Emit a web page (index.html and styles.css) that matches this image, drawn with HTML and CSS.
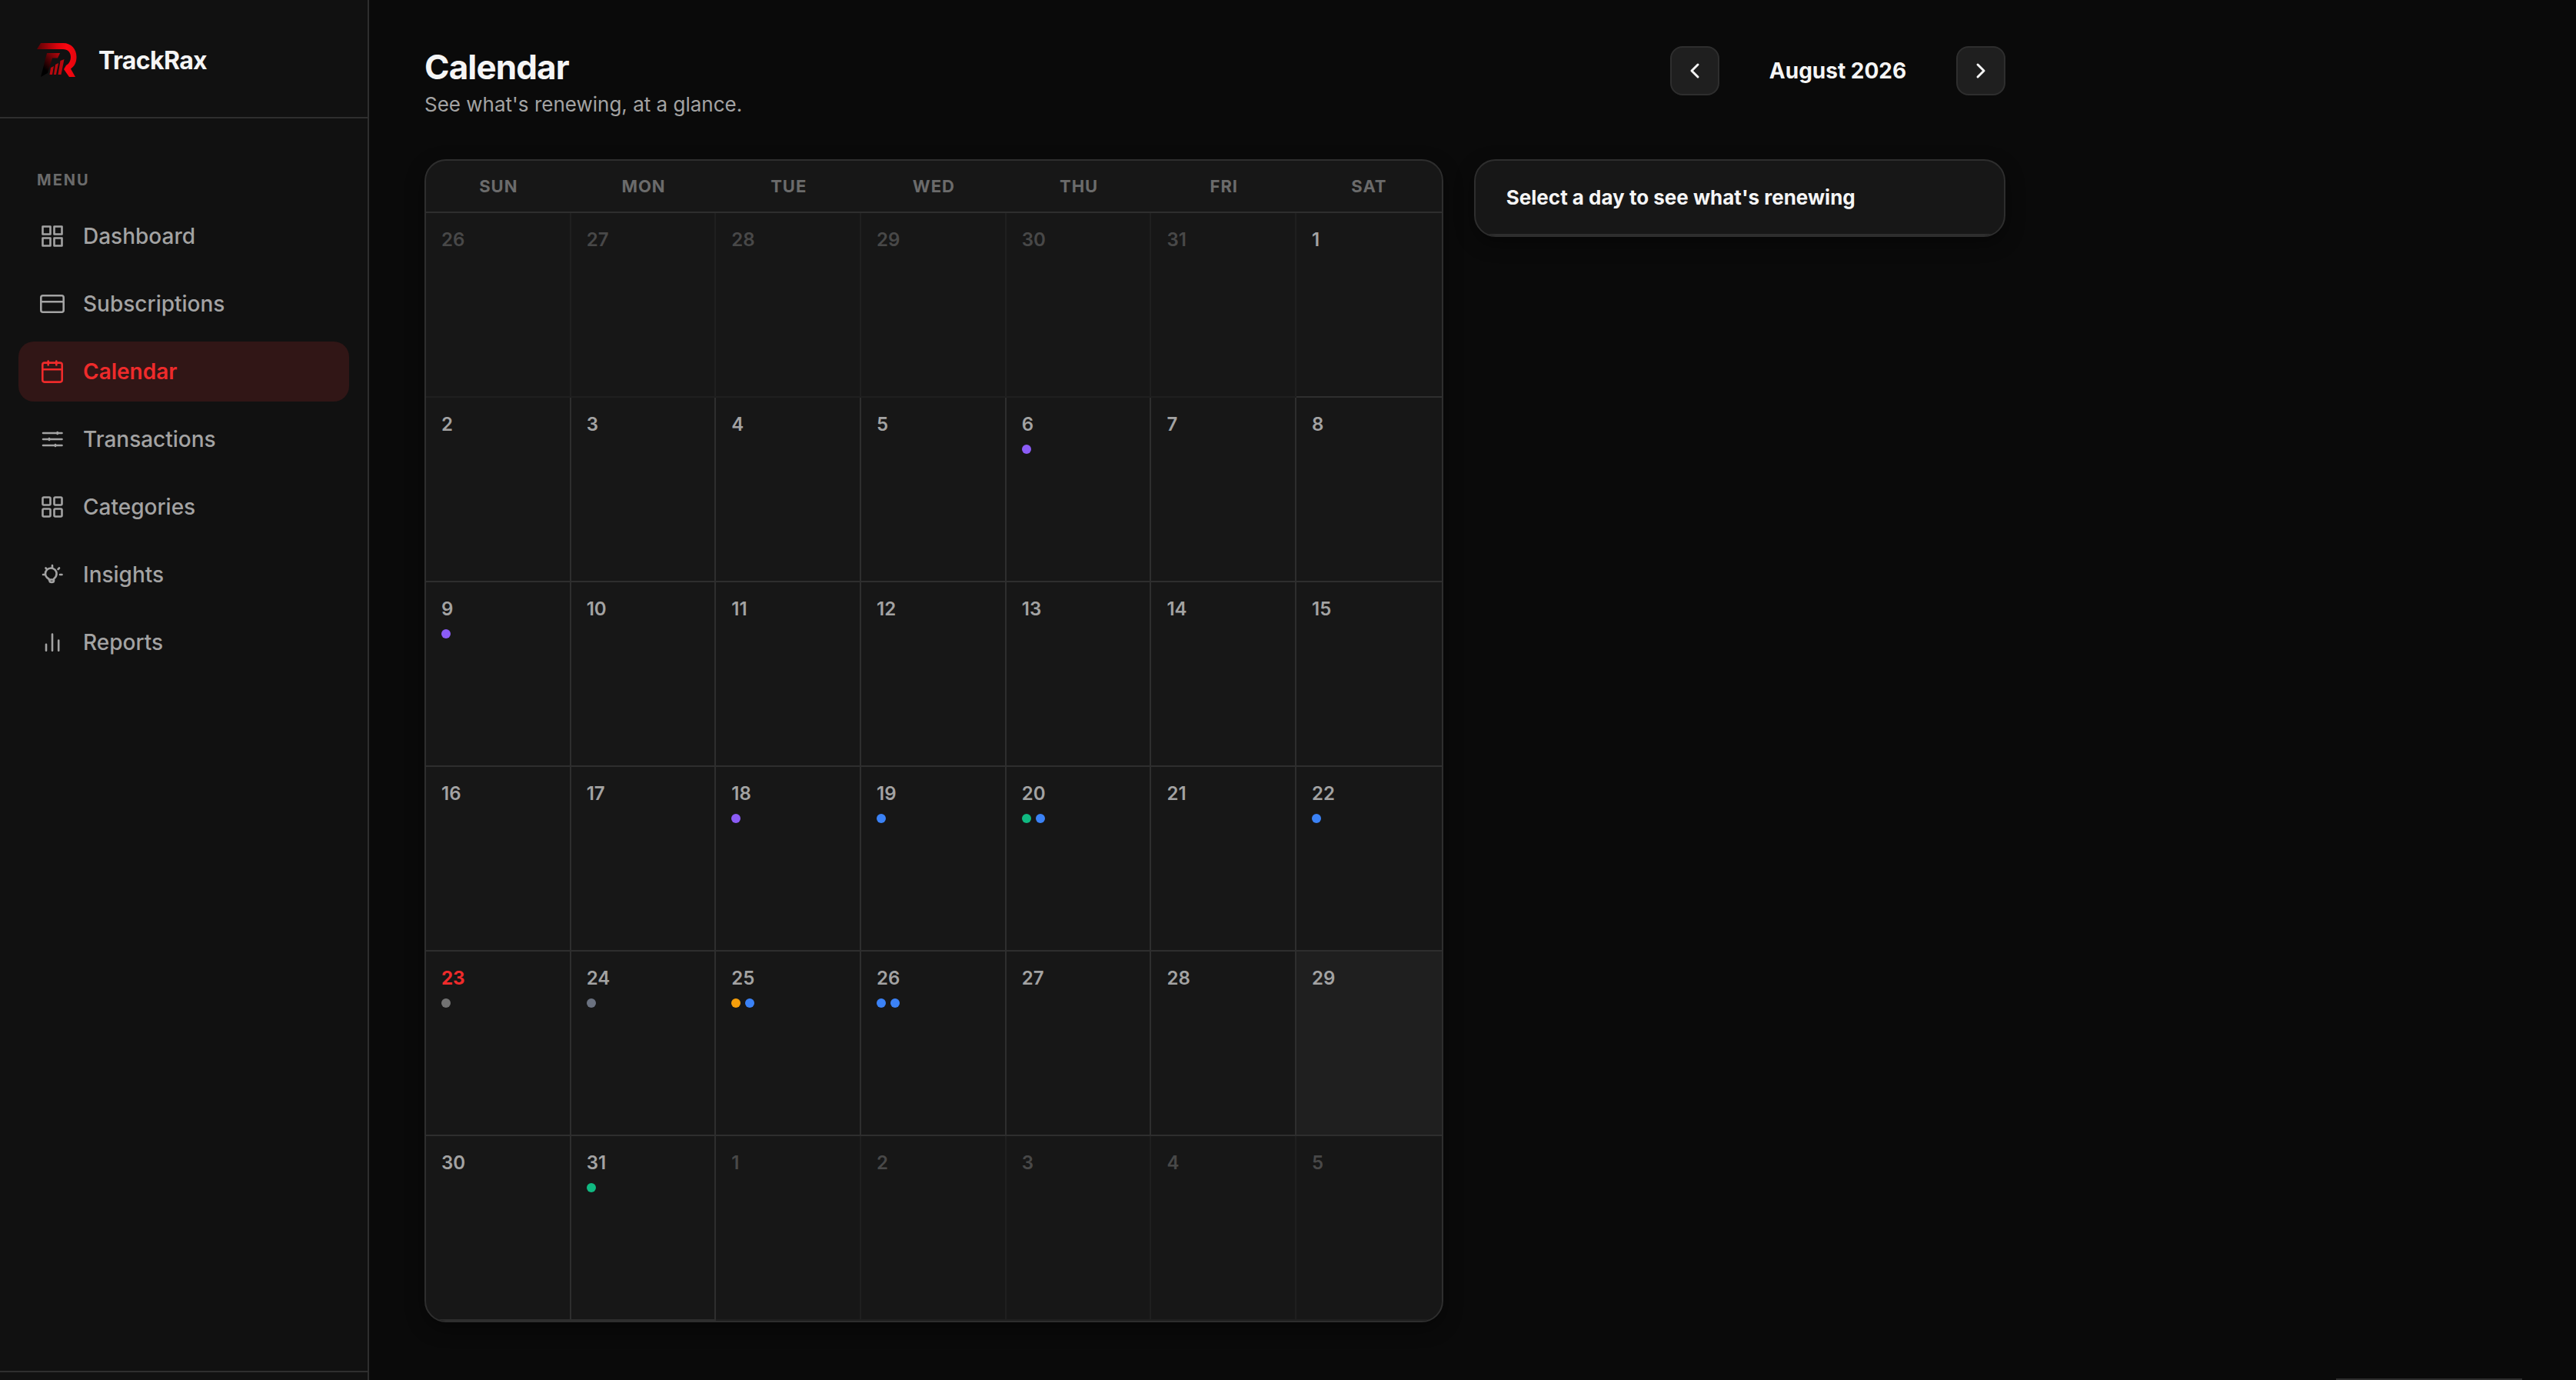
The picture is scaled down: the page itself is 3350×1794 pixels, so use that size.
FILE: index.html
```html
<!DOCTYPE html>
<html lang="en">
<head>
  <meta charset="UTF-8" />
  <meta name="viewport" content="width=device-width, initial-scale=1" />
  <title>TrackRax - Calendar</title>
  <link rel="stylesheet" href="styles.css">
</head>
<body>

  <!-- Sidebar -->
  <aside class="sidebar">
    <div class="brand">
      <svg class="brand-logo" viewBox="0 0 56 56" aria-hidden="true">
        <defs>
          <linearGradient id="red-bow" x1="0" y1="0" x2="1" y2="0">
            <stop offset="0" stop-color="#5a0205" />
            <stop offset="0.5" stop-color="#d8040c" />
            <stop offset="0.75" stop-color="#fb0610" />
            <stop offset="1" stop-color="#e3060e" />
          </linearGradient>
          <linearGradient id="red-stem" x1="1" y1="0" x2="0.2" y2="1">
            <stop offset="0" stop-color="#c0060d" />
            <stop offset="0.45" stop-color="#4c0205" />
            <stop offset="0.8" stop-color="#000000" />
          </linearGradient>
        </defs>
        <path fill="url(#red-bow)" d="M5 6H34C45 6 51.500 14 51.500 24C51.500 31 49 36 44 39.500L50 50H42L35 40L38 35C42 33 44 28 44 24C44 18 40 14 34 14H0Z" />
        <path fill="url(#red-stem)" d="M13 19H30L27 25.500H20L14 45L5 50Z" />
        <path fill="#b8080e" d="M18 38L22 36L20 47H16.500ZM24 34L28 32L25 47H22ZM30.500 29L35.500 27L31.500 47H27.500Z" />
      </svg>
      <span class="brand-name">TrackRax</span>
    </div>

    <nav class="menu">
      <div class="menu-title">MENU</div>
      <a class="menu-item" href="#dashboard">
        <svg class="icon" viewBox="0 0 40 40" aria-hidden="true">
          <rect x="7.5" y="7.5" width="10" height="10" /><rect x="22.5" y="7.5" width="10" height="10" />
          <rect x="7.5" y="22.5" width="10" height="10" /><rect x="22.5" y="22.5" width="10" height="10" />
        </svg>
        Dashboard
      </a>
      <a class="menu-item" href="#subscriptions">
        <svg class="icon" viewBox="0 0 40 40" aria-hidden="true">
          <rect x="5.3" y="9.3" width="29.4" height="21.4" rx="2.5" /><path d="M5.3 17.3H34.7" />
        </svg>
        Subscriptions
      </a>
      <a class="menu-item active" href="#calendar">
        <svg class="icon" viewBox="0 0 40 40" aria-hidden="true">
          <rect x="7.3" y="8.6" width="25.4" height="25" rx="2.5" /><path d="M7.3 17.3H32.7M14.7 6.5V11.5M25.3 6.5V11.5" />
        </svg>
        Calendar
      </a>
      <a class="menu-item" href="#transactions">
        <svg class="icon" viewBox="0 0 40 40" aria-hidden="true">
          <path d="M8 12H32.5M8 20H32.5M8 28H32.5" /><path d="M26.7 11V13M16 19V21M24 27V29" />
        </svg>
        Transactions
      </a>
      <a class="menu-item" href="#categories">
        <svg class="icon" viewBox="0 0 40 40" aria-hidden="true">
          <rect x="7.5" y="7.5" width="10" height="10" rx="1.5" /><rect x="22.5" y="7.5" width="10" height="10" rx="1.5" />
          <rect x="7.5" y="22.5" width="10" height="10" rx="1.5" /><rect x="22.5" y="22.5" width="10" height="10" rx="1.5" />
        </svg>
        Categories
      </a>
      <a class="menu-item" href="#insights">
        <svg class="icon" viewBox="0 0 40 40" aria-hidden="true">
          <path d="M15.5 26.5V25.5C12.5 24 11 21.5 11 18.8A7.3 7.3 0 0 1 25.6 18.8C25.6 21.5 24 24 22 25.5V26.5ZM16.5 27V28C16.5 30.5 22 30.5 22 28V27" />
          <path d="M20 8V10.5M8 20H10M30 20H32.5M11.5 11.5L12.5 12.5M29 11.5L27.5 13" />
        </svg>
        Insights
      </a>
      <a class="menu-item" href="#reports">
        <svg class="icon" viewBox="0 0 40 40" aria-hidden="true">
          <path d="M12 22.8V30.8M20 9.5V30.8M28.2 17.5V30.8" />
        </svg>
        Reports
      </a>
    </nav>

    <div class="sidebar-footer"></div>
  </aside>

  <!-- Content -->
  <main class="content">
    <header class="page-header">
      <div class="page-heading">
        <h1>Calendar</h1>
        <p>See what's renewing, at a glance.</p>
      </div>
      <div class="month-nav">
        <button type="button" class="month-btn" aria-label="Previous month">
          <svg viewBox="0 0 32 32" aria-hidden="true"><path d="M20 8L12 16L20 24" /></svg>
        </button>
        <span class="month-label">August 2026</span>
        <button type="button" class="month-btn" aria-label="Next month">
          <svg viewBox="0 0 32 32" aria-hidden="true"><path d="M12 8L20 16L12 24" /></svg>
        </button>
      </div>
    </header>

    <div class="calendar-layout">
      <section class="card calendar">
        <div class="weekdays">
          <span>SUN</span>
          <span>MON</span>
          <span>TUE</span>
          <span>WED</span>
          <span>THU</span>
          <span>FRI</span>
          <span>SAT</span>
        </div>
        <div class="days" id="days"></div>
      </section>

      <section class="card day-panel">
        <h2>Select a day to see what's renewing</h2>
      </section>
    </div>
  </main>

  <div class="toast"></div>

  <script>
    // Renewals per day of the month, one dot per category
    const renewals = {
      6: ["purple"],
      9: ["purple"],
      18: ["purple"],
      19: ["blue"],
      20: ["green", "blue"],
      22: ["blue"],
      23: ["gray"],
      24: ["slate"],
      25: ["orange", "blue"],
      26: ["blue", "blue"],
      31: ["green"],
    };
    const today = 23;
    const highlighted = 29;

    const first = new Date(2026, 7, 1).getDay();
    const daysEl = document.getElementById("days");

    for (let i = 0; i < 42; i++) {
      const date = new Date(2026, 7, 1 - first + i);
      const day = date.getDate();
      const outside = date.getMonth() !== 7;

      const cell = document.createElement("button");
      cell.type = "button";
      cell.className = "day";
      if (outside) cell.classList.add("outside");
      if (!outside && day === today) cell.classList.add("today");
      if (!outside && day === highlighted) cell.classList.add("highlighted");

      const dots = outside ? [] : renewals[day] || [];
      cell.innerHTML = `<span class="day-number">${day}</span>`;
      if (dots.length) {
        cell.innerHTML += `<span class="dots">${dots
          .map((color) => `<span class="dot ${color}"></span>`)
          .join("")}</span>`;
      }
      daysEl.appendChild(cell);
    }
  </script>
</body>
</html>
```
FILE: styles.css
```css
:root {
  --bg: #0a0a0a;
  --sidebar: #111111;
  --card: #171717;
  --raised: #1f1f1f;
  --border: #2e2e2e;
  --text: #f5f5f5;
  --text-soft: #a3a3a3;
  --text-dim: #6b6b6b;
  --accent: #ef2b2b;
}

* {
  box-sizing: border-box;
}

body {
  margin: 0;
  min-height: 100vh;
  display: flex;
  background: var(--bg);
  color: var(--text);
  font-family: Inter, sans-serif;
}

h1, h2, p {
  margin: 0;
}

button {
  font-family: inherit;
  cursor: pointer;
}

/* Sidebar */
.sidebar {
  flex: 0 0 480px;
  display: flex;
  flex-direction: column;
  background: var(--sidebar);
  border-right: 2px solid var(--border);
}

.brand {
  display: flex;
  align-items: center;
  gap: 24px;
  padding: 50px 48px 46px;
  border-bottom: 2px solid var(--border);
}

.brand-logo {
  width: 56px;
  height: 56px;
}

.brand-name {
  font-size: 32px;
  font-weight: 700;
  letter-spacing: -0.02em;
}

.menu {
  flex: 1;
  display: flex;
  flex-direction: column;
  gap: 10px;
  padding: 68px 24px 24px;
}

.menu-title {
  padding: 0 24px 12px;
  font-size: 20px;
  line-height: 24px;
  font-weight: 700;
  letter-spacing: 2px;
  color: var(--text-dim);
}

.menu-item {
  display: flex;
  align-items: center;
  gap: 20px;
  height: 78px;
  padding: 0 24px;
  border-radius: 20px;
  font-size: 28px;
  font-weight: 500;
  color: var(--text-soft);
  text-decoration: none;
}

.menu-item.active {
  background: #311616;
  color: var(--accent);
  font-weight: 600;
}

.icon {
  width: 40px;
  height: 40px;
  fill: none;
  stroke: currentColor;
  stroke-width: 2.6;
  stroke-linecap: round;
  stroke-linejoin: round;
}

.sidebar-footer {
  height: 12px;
  border-top: 2px solid var(--border);
}

/* Content */
.content {
  flex: 1;
  max-width: 2200px;
  padding: 60px 72px;
}

.page-header {
  display: flex;
  justify-content: space-between;
  align-items: flex-start;
  margin-bottom: 56px;
}

.page-heading {
  display: flex;
  flex-direction: column;
  gap: 5px;
}

.page-heading h1 {
  font-size: 44px;
  line-height: 55px;
  font-weight: 700;
  letter-spacing: -0.02em;
}

.page-heading p {
  font-size: 26px;
  line-height: 31px;
  color: var(--text-soft);
}

.month-nav {
  display: flex;
  align-items: center;
  gap: 24px;
}

.month-btn {
  display: flex;
  align-items: center;
  justify-content: center;
  width: 64px;
  height: 64px;
  padding: 0;
  background: var(--raised);
  border: 2px solid var(--border);
  border-radius: 16px;
  color: var(--text);
}

.month-btn svg {
  width: 32px;
  height: 32px;
  fill: none;
  stroke: currentColor;
  stroke-width: 3;
  stroke-linecap: round;
  stroke-linejoin: round;
}

.month-label {
  min-width: 260px;
  text-align: center;
  font-size: 28px;
  font-weight: 700;
}

.calendar-layout {
  display: grid;
  grid-template-columns: 23fr 12fr;
  align-items: start;
  gap: 40px;
}

.card {
  background: var(--card);
  border: 2px solid var(--border);
  border-radius: 28px;
  box-shadow: 0 8px 24px rgba(0, 0, 0, 0.4);
  overflow: hidden;
}

.weekdays,
.days {
  display: grid;
  grid-template-columns: repeat(7, 1fr);
}

.weekdays {
  border-bottom: 2px solid var(--border);
}

.weekdays span {
  padding: 20px 0;
  text-align: center;
  font-size: 22px;
  line-height: 26px;
  font-weight: 700;
  letter-spacing: 1px;
  color: var(--text-dim);
}

.day {
  display: flex;
  flex-direction: column;
  justify-content: flex-start;
  align-items: flex-start;
  gap: 12px;
  min-height: 240px;
  padding: 20px;
  background: transparent;
  border: none;
  border-right: 2px solid var(--border);
  border-bottom: 2px solid var(--border);
  color: var(--text-soft);
}

.day:nth-child(7n) {
  border-right: none;
}

.day-number {
  font-size: 24px;
  line-height: 29px;
  font-weight: 600;
}

.day.outside {
  opacity: 0.35;
}

.day.today .day-number {
  color: var(--accent);
  font-weight: 700;
}

.day.highlighted {
  background: var(--raised);
}

.dots {
  display: flex;
  gap: 6px;
}

.dot {
  width: 12px;
  height: 12px;
  border-radius: 50%;
}

.dot.purple { background: #8b5cf6; }
.dot.blue { background: #3b82f6; }
.dot.green { background: #10b981; }
.dot.orange { background: #f59e0b; }
.dot.gray { background: #737373; }
.dot.slate { background: #6b7280; }

.day-panel h2 {
  padding: 32px 40px;
  border-bottom: 2px solid var(--border);
  font-size: 26px;
  line-height: 31px;
  font-weight: 700;
}

/* Toast peeking in at the bottom edge */
.toast {
  position: fixed;
  right: 70px;
  bottom: 0;
  width: 242px;
  height: 2px;
  background: var(--border);
}
```
